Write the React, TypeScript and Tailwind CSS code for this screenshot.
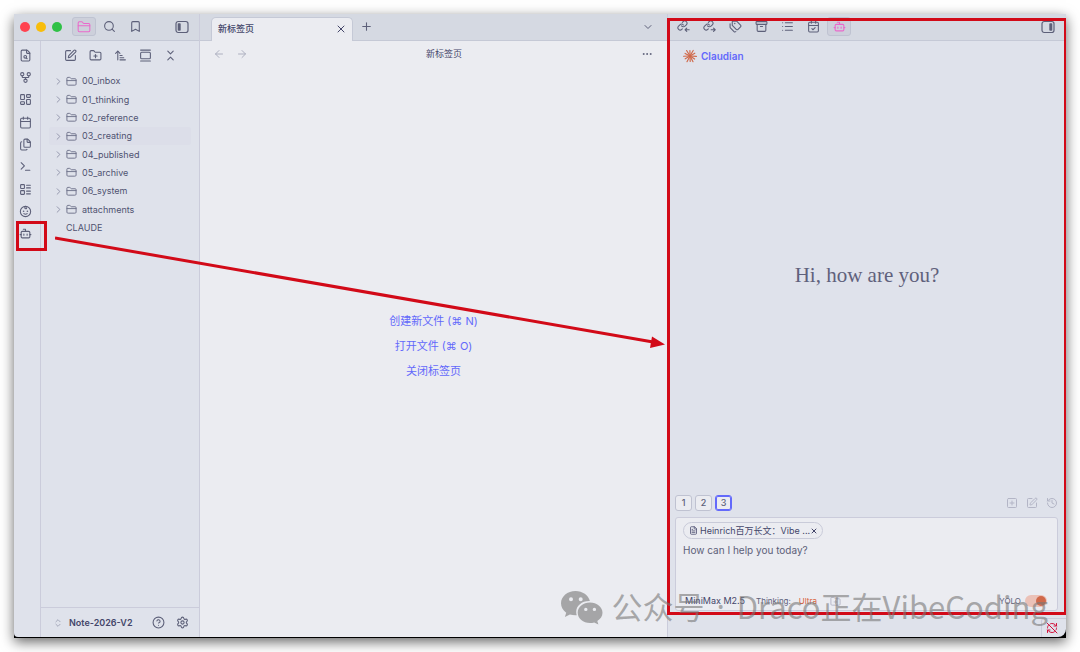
import React, { useState } from 'react';
import clsx from 'clsx';
import {
  Archive, ArrowLeft, ArrowRight, ArrowUpNarrowWide, Bookmark, Bot, Calendar, CalendarCheck,
  ChevronDown, ChevronRight, ChevronsDownUp, ChevronsUpDown, Ellipsis, FileSearch, FileText, Files,
  FolderClosed, FolderPlus, GalleryVertical, GitFork, HelpCircle, History, LayoutDashboard, LayoutList,
  List, Plus, RefreshCwOff, Search, Settings, SquarePen, SquarePlus, Tags, Terminal, X,
} from 'lucide-react';

type IconType = React.ComponentType<{ size?: number; strokeWidth?: number }>;

const BabyFace: IconType = ({ size = 14 }) => (
  <svg width={size} height={size} viewBox="0 0 24 24" fill="none" stroke="currentColor" strokeWidth={2} strokeLinecap="round" strokeLinejoin="round">
    <circle cx="12" cy="12" r="9.5" />
    <path d="M8.500 11.500h.01M15.500 11.500h.01" strokeWidth={3} />
    <path d="M9 16c1.800 1.300 4.200 1.300 6 0" />
    <path d="M12 2.500c-2 1.500-1.500 4.500.5 4.500 1.300 0 1.800-1.200 1.200-2" />
  </svg>
);

const LinkArrow = ({ size = 14, incoming = false }: { size?: number; incoming?: boolean }) => (
  <svg width={size} height={size} viewBox="0 0 24 24" fill="none" stroke="currentColor" strokeWidth={2} strokeLinecap="round" strokeLinejoin="round">
    <g transform="scale(0.84)" strokeWidth={2.3}>
      <path d="M10 13a5 5 0 0 0 7.540.540l3-3a5 5 0 0 0-7.070-7.070l-1.720 1.710" />
      <path d="M14 11a5 5 0 0 0-7.540-.540l-3 3a5 5 0 0 0 7.070 7.070l1.200-1.200" />
    </g>
    {incoming ? <path d="M22.500 18H15m3-3-3 3 3 3" /> : <path d="M15 18h7.500m-3-3 3 3-3 3" />}
  </svg>
);

const LinksIn: IconType = ({ size }) => <LinkArrow size={size} incoming />;
const LinksOut: IconType = ({ size }) => <LinkArrow size={size} />;

const PanelIcon = ({ right = false }: { right?: boolean }) => (
  <svg width="14" height="14" viewBox="0 0 14 14" fill="none">
    <rect x="1" y="1.5" width="12" height="11" rx="2.2" stroke="currentColor" strokeWidth="1.2" />
    <rect x={right ? 8.3 : 2.7} y="3.2" width="3" height="7.6" rx="0.8" fill="currentColor" />
  </svg>
);

const Spark = () => (
  <svg width="14" height="14" viewBox="-12 -12 24 24" stroke="#d0694a" strokeWidth="2" strokeLinecap="round">
    {[4, 33, 62, 88, 118, 149, 178, 208, 238, 269, 300, 330].map((a, i) => (
      <line key={a} x1="0" y1="0" x2={i % 2 ? 9.5 : 11} y2="0" transform={`rotate(${a})`} />
    ))}
  </svg>
);

const WeChat = () => (
  <svg width="42" height="36" viewBox="0 0 42 36" fill="currentColor">
    <path
      fillRule="evenodd"
      d="M14.5 1C6.500 1 0 6.500 0 13.300c0 3.800 2 7.100 5.200 9.400L3.900 27l5-2.600c1.800.5 3.600.8 5.600.8h1.200a10.500 10.500 0 0 1-.5-3.200c0-6.200 5.700-10.900 12.800-10.900h.9C27.500 5.300 21.500 1 14.500 1ZM10 7.300a2 2 0 1 1 0 4 2 2 0 0 1 0-4Zm9.700 0a2 2 0 1 1 0 4 2 2 0 0 1 0-4Z"
    />
    <path
      fillRule="evenodd"
      d="M29 12.500c-6.900 0-12.300 4.500-12.300 10.200 0 5.800 5.500 10.300 12.300 10.300 1.500 0 2.900-.2 4.200-.6l4.200 2.200-1.100-3.700c3.200-1.900 5.200-4.900 5.200-8.200 0-5.700-5.700-10.200-12.500-10.200Zm-4.200 5.200a1.700 1.700 0 1 1 0 3.400 1.700 1.700 0 0 1 0-3.400Zm8.600 0a1.700 1.700 0 1 1 0 3.400 1.700 1.700 0 0 1 0-3.400Z"
    />
  </svg>
);

const folders = [
  '00_inbox',
  '01_thinking',
  '02_reference',
  '03_creating',
  '04_published',
  '05_archive',
  '06_system',
  'attachments',
];

const ribbonItems: { label: string; icon: IconType }[] = [
  { label: 'Search', icon: FileSearch },
  { label: 'Graph', icon: GitFork },
  { label: 'Canvas', icon: LayoutDashboard },
  { label: 'Daily note', icon: Calendar },
  { label: 'Templates', icon: Files },
  { label: 'Command palette', icon: Terminal },
  { label: 'Bases', icon: LayoutList },
  { label: 'BRAT', icon: BabyFace },
  { label: 'Claudian', icon: Bot },
];

const explorerActions: { label: string; icon: IconType }[] = [
  { label: 'New note', icon: SquarePen },
  { label: 'New folder', icon: FolderPlus },
  { label: 'Sort', icon: ArrowUpNarrowWide },
  { label: 'Auto reveal', icon: GalleryVertical },
  { label: 'Collapse all', icon: ChevronsDownUp },
];

const rightTabs: { label: string; icon: IconType }[] = [
  { label: 'Backlinks', icon: LinksIn },
  { label: 'Outgoing links', icon: LinksOut },
  { label: 'Tags', icon: Tags },
  { label: 'Archive', icon: Archive },
  { label: 'Outline', icon: List },
  { label: 'Calendar', icon: CalendarCheck },
  { label: 'Claudian', icon: Bot },
];

const LeftSide: React.FC = () => (
  <aside className="flex w-[186px] shrink-0 flex-col rounded-bl-[4px] border-r border-[#cbccdb] bg-[#dfe2eb]">
    <div className="flex h-[27px] shrink-0 items-center border-b border-[#c5c9d6] bg-[#d5d9e2] pb-px pl-[6px] pr-[10px]">
      <div className="flex gap-[6px]">
        <span className="size-[10px] rounded-full bg-[#ff4350]" />
        <span className="size-[10px] rounded-full bg-[#f8bd0b]" />
        <span className="size-[10px] rounded-full bg-[#2fc146]" />
      </div>
      <button aria-label="Files" className="ml-[10px] flex h-[19px] w-[24px] items-center justify-center rounded-[3px] border border-[#bfc3d1] bg-[#cdd0db] text-[#ea69cb]">
        <FolderClosed size={14} strokeWidth={1.75} />
      </button>
      <button aria-label="Search" className="ml-[7px]"><Search size={13} /></button>
      <button aria-label="Bookmarks" className="ml-[13px]"><Bookmark size={13} /></button>
      <button aria-label="Toggle left sidebar" className="ml-auto"><PanelIcon /></button>
    </div>

    <div className="flex flex-1">
      <nav className="w-[27px] shrink-0 border-r border-[#cbccdb] pt-[3px]">
        <div className="grid h-[201px] auto-rows-fr">
          {ribbonItems.map(({ label, icon: Icon }) => (
            <button key={label} aria-label={label} className="relative flex items-center pl-[5px]">
              <Icon size={13} />
              {label === 'Claudian' && (
                <span className="absolute -top-[2px] left-[2px] h-[30px] w-[31px] border-[3px] border-[#d20a18]" />
              )}
            </button>
          ))}
        </div>
      </nav>

      <div className="flex flex-1 flex-col">
        <div className="flex h-[28px] items-center gap-3 pl-[23px]">
          {explorerActions.map(({ label, icon: Icon }) => (
            <button key={label} aria-label={label}><Icon size={13} /></button>
          ))}
        </div>
        <ul className="mx-2 mt-[3px] grid h-[165px] auto-rows-fr text-[9px] text-[#4f5271]">
          {folders.map(name => (
            <li key={name} className={clsx('flex items-center rounded-[2px] pl-1', name === '03_creating' && 'bg-[#dcdee9]')}>
              <span className="text-[#8f92a8]"><ChevronRight size={11} /></span>
              <span className="ml-[2px] mr-[5px] text-[#6b6e88]"><FolderClosed size={11} /></span>
              {name}
            </li>
          ))}
          <li className="flex items-center pl-[17px]">CLAUDE</li>
        </ul>
        <div className="mt-auto flex h-[30px] items-center border-t border-[#cbccdb] pl-3 pr-[10px] text-[9px] font-semibold text-[#44466a]">
          <span className="text-[#9a9db1]"><ChevronsUpDown size={10} /></span>
          <span className="ml-[6px]">Note-2026-V2</span>
          <button aria-label="Help" className="ml-auto text-[#5d6079]"><HelpCircle size={13} /></button>
          <button aria-label="Settings" className="ml-[11px] text-[#5d6079]"><Settings size={13} /></button>
        </div>
      </div>
    </div>
  </aside>
);

const Editor: React.FC = () => (
  <main className="flex min-w-0 flex-1 flex-col bg-[#ebecf1]">
    <div className="flex h-[27px] shrink-0 items-end border-b border-[#c5c9d6] bg-[#d5d9e2] pl-[11px] pr-[13px]">
      <div className="-mb-px flex h-[24px] w-[142px] items-center justify-between rounded-t-[5px] border border-b-0 border-[#c5c9d6] bg-[#ebecf1] pb-[2px] pl-[6px] pr-[5px] text-[9px] font-medium text-[#44466a]">
        新标签页
        <button aria-label="Close tab"><X size={12} /></button>
      </div>
      <button aria-label="New tab" className="mb-[7px] ml-[7px]"><Plus size={13} /></button>
      <button aria-label="Tab list" className="mb-[7px] ml-auto"><ChevronDown size={12} /></button>
    </div>

    <div className="flex h-[26px] shrink-0 items-center justify-between pl-[13px] pr-[14px]">
      <div className="flex w-[82px] gap-[11px] text-[#adb0c0]">
        <button aria-label="Back"><ArrowLeft size={12} /></button>
        <button aria-label="Forward"><ArrowRight size={12} /></button>
      </div>
      <h1 className="text-[9px] text-[#44466a]">新标签页</h1>
      <div className="flex w-[60px] justify-end">
        <button aria-label="More options"><Ellipsis size={12} /></button>
      </div>
    </div>

    <div className="flex flex-1 flex-col items-center justify-center gap-[9px] pb-[13px] text-[11px] leading-4 text-[#6369fb]">
      <a href="#new">创建新文件 (⌘ N)</a>
      <a href="#open">打开文件 (⌘ O)</a>
      <a href="#close">关闭标签页</a>
    </div>
  </main>
);

const ChatPanel: React.FC = () => {
  const [active, setActive] = useState(3);
  const [yolo, setYolo] = useState(true);
  const [message, setMessage] = useState('');

  return (
    <aside className="relative flex w-[399px] shrink-0 flex-col rounded-br-[8px] border-l border-[#cbccdb] bg-[#dfe2eb]">
      <div className="flex h-[27px] shrink-0 items-center border-b border-[#c5c9d6] bg-[#d5d9e2] pb-px pl-[3px] pr-[11px]">
        <div className="flex gap-[2px]">
          {rightTabs.map(({ label, icon: Icon }) => (
            <button
              key={label}
              aria-label={label}
              className={clsx(
                'flex h-[19px] w-[24px] items-center justify-center rounded-[3px] border',
                label === 'Claudian' ? 'border-[#bfc3d1] bg-[#cdd0db] text-[#ea69cb]' : 'border-transparent',
              )}
            >
              <Icon size={13} />
            </button>
          ))}
        </div>
        <button aria-label="Toggle right sidebar" className="ml-auto"><PanelIcon right /></button>
      </div>

      <header className="flex h-[30px] shrink-0 items-center gap-1 pl-[15px]">
        <Spark />
        <h2 className="text-[10px] font-semibold text-[#6369fb]">Claudian</h2>
      </header>

      <div className="flex flex-1 items-center justify-center pb-[14px]">
        <p className="font-['Liberation_Serif',serif] text-[21px] text-[#5f617c]">Hi, how are you?</p>
      </div>

      <div className="flex h-[16px] shrink-0 items-center gap-[3px] pl-[7px] pr-[8px]">
        {[1, 2, 3].map(n => (
          <button
            key={n}
            onClick={() => setActive(n)}
            className={clsx(
              'flex h-[16px] w-[17px] items-center justify-center rounded-[3px] border bg-[#ebecf1] text-[9px] font-medium text-[#5d6079]',
              n === active ? 'border-[#6369fb] ring-1 ring-inset ring-[#6369fb]' : 'border-[#bfc2d1]',
            )}
          >
            {n}
          </button>
        ))}
        <div className="ml-auto flex gap-2 text-[#b3b5c6]">
          <button aria-label="New tab"><SquarePlus size={12} /></button>
          <button aria-label="New conversation"><SquarePen size={12} /></button>
          <button aria-label="History"><History size={12} /></button>
        </div>
      </div>

      <div className="ml-[7px] mr-[8px] mt-[6px] flex h-[94px] shrink-0 flex-col rounded-[3px] border border-[#cbccdb] bg-[#ebecf1] px-[7px] pt-1">
        <div className="flex h-[17px] w-[140px] shrink-0 items-center rounded-full border border-[#c9cbd9] pl-[5px] pr-1 text-[9px] text-[#44466a]">
          <FileText size={9} className="shrink-0" />
          <span className="ml-[2px] whitespace-nowrap">Heinrich百万长文：Vibe ...</span>
          <button aria-label="Remove file" className="ml-auto"><X size={8} strokeWidth={3} /></button>
        </div>
        <textarea
          aria-label="Message"
          rows={1}
          value={message}
          onChange={e => setMessage(e.target.value)}
          placeholder="How can I help you today?"
          className="mt-[3px] h-[49px] w-full shrink-0 resize-none text-[10px] leading-4 outline-none placeholder:text-[#5d6079]"
        />
        <div className="flex h-[20px] shrink-0 items-center text-[8px] text-[#5d6079]">
          <button className="ml-[2px] text-[9px] text-[#44466a]">MiniMax M2.5</button>
          <span className="ml-[11px]">Thinking:</span>
          <button className="ml-[8px] text-[#d9623c]">Ultra</button>
          <button aria-label="Add folder" className="ml-[13px] text-[#b3b5c6]"><FolderPlus size={11} /></button>
          <label htmlFor="yolo" className="ml-auto">YOLO</label>
          <input
            id="yolo"
            type="checkbox"
            checked={yolo}
            onChange={e => setYolo(e.target.checked)}
            className="ml-1 mr-[3px] flex h-[12px] w-[22px] appearance-none items-center rounded-full bg-[#c9cbd9] px-px before:size-[10px] before:rounded-full before:bg-[#8d90a5] checked:justify-end checked:bg-[#ebc1b7] checked:before:bg-[#d0694a]"
          />
        </div>
      </div>

      <div className="mt-[7px] flex h-[19px] shrink-0 justify-end">
        <div className="flex w-[25px] items-center rounded-tl-[3px] border-l border-t border-[#cbccdb] pl-[4px] text-[#d20f39]">
          <RefreshCwOff size={12} />
        </div>
      </div>

      <div className="pointer-events-none absolute -left-px bottom-[22px] right-0 top-[4px] border-[3px] border-r-2 border-[#d20a18]" />
    </aside>
  );
};

const App: React.FC = () => (
  <div className="flex min-h-screen bg-white p-[14px] font-[Inter,'Noto_Sans_CJK_SC',sans-serif]">
    <div className="relative flex flex-1 bg-black pb-px text-[#5d6079] shadow-[0_4px_12px_rgba(0,0,0,0.6)]">
      <LeftSide />
      <Editor />
      <ChatPanel />

      {/* arrow from the ribbon button to the chat panel */}
      <svg className="pointer-events-none absolute left-[41px] top-[220px]" width="612" height="120" viewBox="0 0 612 120">
        <line x1="0" y1="4" x2="598" y2="108" stroke="#d20a18" strokeWidth="3" />
        <path d="M597 102.500 610 110.500 595 114Z" fill="#d20a18" />
      </svg>

      <div className="pointer-events-none absolute bottom-[8px] right-[18px] flex items-center gap-[8px] whitespace-nowrap text-[#777]/60">
        <WeChat />
        <p className="flex items-center gap-[12px] pb-1 font-['Noto_Sans_CJK_SC',sans-serif] text-[31px] leading-[40px]">
          公众号
          <span className="font-['Noto_Sans',sans-serif]">·</span>
          Draco正在VibeCoding
        </p>
      </div>
    </div>
  </div>
);

export default App;
